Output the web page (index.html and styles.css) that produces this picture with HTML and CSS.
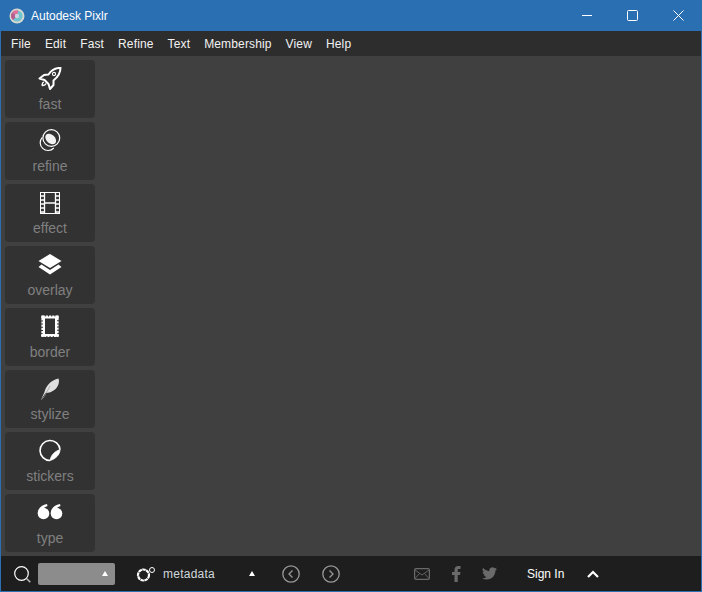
FILE: index.html
```html
<!DOCTYPE html>
<html lang="en">
<head>
<meta charset="utf-8">
<title>Autodesk Pixlr</title>
<link rel="stylesheet" href="styles.css">
</head>
<body>
<div class="window">
  <header class="titlebar">
    <svg class="app-icon" viewBox="0 0 16 16" width="16" height="16">
      <circle cx="8" cy="8" r="7.5" fill="#d8d8d0"/>
      <circle cx="8" cy="8" r="5.6" fill="#6fc4cf"/>
      <path d="M8 8 L3 4.5 A5.6 5.6 0 0 1 9.5 2.6 Z" fill="#e0709a"/>
      <path d="M8 8 L3 4.5 A5.6 5.6 0 0 0 4 12 Z" fill="#b85a8a"/>
      <circle cx="8" cy="8" r="2.2" fill="#c9d6e0"/>
    </svg>
    <span class="app-title">Autodesk Pixlr</span>
    <div class="win-controls">
      <svg width="10" height="11" viewBox="0 0 10 11"><path d="M0 5.500H10" stroke="#fff" fill="none"/></svg>
      <svg width="11" height="11" viewBox="0 0 11 11"><rect x=".5" y=".5" width="10" height="10" rx="1" stroke="#fff" fill="none"/></svg>
      <svg width="11" height="11" viewBox="0 0 11 11"><path d="M.5 .5L10.500 10.500M10.500 .5L.5 10.500" stroke="#fff" fill="none"/></svg>
    </div>
  </header>
  <nav class="menubar">
    <span>File</span><span>Edit</span><span>Fast</span><span>Refine</span><span>Text</span><span>Membership</span><span>View</span><span>Help</span>
  </nav>
  <main class="workspace">
    <aside class="tools">
      <div class="tool">
        <svg viewBox="0 0 24 24" width="24" height="24" fill="none" stroke="#fff" stroke-width="2" stroke-linejoin="round"><path d="M22.500 .8C17 1 13 3.500 10.500 7.500L6 8L1.500 11.500L6.500 13L10.500 17L12 22L15.500 18L15.500 13.500C20 10 22.500 6 22.500 .8Z"/><circle cx="16" cy="7" r="1.600" stroke-width="1.100"/><path d="M6 15C4.500 15.500 4 17 4.200 18.500C6 18.500 7.500 18 8 16.500" stroke-width="1.300"/></svg>
        <span>fast</span>
      </div>
      <div class="tool">
        <svg viewBox="0 0 24 24" width="24" height="24" fill="none" stroke="#fff" stroke-width="1.200"><circle cx="13.300" cy="9" r="8.400"/><path d="M4.300 8.300A7.500 7.500 0 0 0 15.800 19"/><ellipse cx="12.700" cy="10" rx="6.200" ry="4.300" transform="rotate(42 12.700 10)" fill="#f2f2f2" stroke="none"/></svg>
        <span>refine</span>
      </div>
      <div class="tool">
        <svg viewBox="0 0 22 24" width="22" height="24" fill="none" stroke="#fff"><path d="M1 1.500H21M1 22.500H21" stroke-width="1"/><path d="M5.500 1V23M16.500 1V23M5.500 12H16.500" stroke-width="1.300"/><path d="M1.500 1V23M20.500 1V23" stroke-width="1" /><path d="M1 5H5M1 9H5M1 13H5M1 17H5M1 21H5M17 5H21M17 9H21M17 13H21M17 17H21M17 21H21" stroke-width="1.300"/></svg>
        <span>effect</span>
      </div>
      <div class="tool">
        <svg viewBox="0 0 24 24" width="24" height="24" fill="#fff"><path d="M12 1L23.500 8L12 15L.5 8Z"/><path d="M3.500 11.500L12 17L20.500 11.500L23.500 14L12 21.500L.5 14Z"/></svg>
        <span>overlay</span>
      </div>
      <div class="tool">
        <svg viewBox="0 0 20 24" width="20" height="24" fill="none" stroke="#fff"><rect x="4" y="2.500" width="12" height="17.500" stroke-width="2"/><rect x="2.600" y="1.800" width="14.800" height="19" stroke-width="2.400" stroke-dasharray="2.200 1"/><g fill="#fff" stroke="none"><circle cx="3" cy="2.300" r="1.800"/><circle cx="17" cy="2.300" r="1.800"/><circle cx="3" cy="20.200" r="1.800"/><circle cx="17" cy="20.200" r="1.800"/></g></svg>
        <span>border</span>
      </div>
      <div class="tool">
        <svg viewBox="0 0 20 24" width="20" height="24"><path d="M1 22.700L4.500 15C6 9 11 3 18.500 1.500C20 5 18 10 15 12.500C12 15 9 16 5.500 16Z" fill="#e0e0e0"/><path d="M1 22.700L4 20L10 9" stroke="#999" fill="none" stroke-width=".7"/></svg>
        <span>stylize</span>
      </div>
      <div class="tool">
        <svg viewBox="0 0 24 24" width="24" height="24" fill="none" stroke="#fff" stroke-width="1.600"><path d="M22 10.700A10 10 0 1 0 12 21.500"/><path d="M12 21.500C13 16 17 12 22 10.700C22 15 18 20 12 21.500Z" fill="#fff" stroke-width=".8"/></svg>
        <span>stickers</span>
      </div>
      <div class="tool">
        <svg viewBox="0 0 26 24" width="26" height="24" fill="#fff"><circle cx="6.500" cy="12.500" r="5.800"/><circle cx="19.500" cy="12.500" r="5.800"/><path d="M.8 12C1 7 5 3.500 10 3L10.500 5C7 6 5 9 5 12Z"/><path d="M13.800 12C14 7 18 3.500 23 3L23.500 5C20 6 18 9 18 12Z"/></svg>
        <span>type</span>
      </div>
    </aside>
  </main>
  <footer class="statusbar">
    <svg class="search" viewBox="0 0 18 18" width="18" height="18" fill="none" stroke="#fff"><circle cx="8.500" cy="8.500" r="6.800" stroke-width="1.200"/><path d="M13.500 13.500L17.300 17.300" stroke="#bbb" stroke-width="1.500"/></svg>
    <div class="zoom-select"><i class="tri"></i></div>
    <svg class="meta-icon" viewBox="0 0 20 16" width="20" height="16" fill="none" stroke="#fff"><circle cx="7.500" cy="9" r="5.500" stroke-width="2.200" stroke-dasharray="3.500 .5"/><circle cx="16" cy="4" r="2.500" stroke-width="1"/></svg>
    <span class="meta-label">metadata</span>
    <i class="tri meta-tri"></i>
    <svg class="prev" viewBox="0 0 18 18" width="18" height="18" fill="none" stroke="#999" stroke-width="1.300"><circle cx="9" cy="9" r="8.200"/><path d="M10.500 5.500L7 9L10.500 12.500"/></svg>
    <svg class="next" viewBox="0 0 18 18" width="18" height="18" fill="none" stroke="#999" stroke-width="1.300"><circle cx="9" cy="9" r="8.200"/><path d="M7.500 5.500L11 9L7.500 12.500"/></svg>
    <svg class="mail" viewBox="0 0 16 12" width="16" height="12" fill="none" stroke="#6a6a6a" stroke-width="1.200"><rect x=".6" y=".6" width="14.800" height="10.800" rx="1.500"/><path d="M1 2L8 7L15 2M1 10.500L5.500 5.500M15 10.500L10.500 5.500" stroke-width=".9"/></svg>
    <svg class="fb" viewBox="0 0 9 16" width="9" height="16"><path d="M2.500 16V9H0V6H2.500V4C2.500 1.500 4 0 6.300 0H8.500V3H7C6 3 5.700 3.400 5.700 4.300V6H8.500L8 9H5.700V16Z" fill="#6a6a6a"/></svg>
    <svg class="tw" viewBox="0 0 24 20" width="15" height="13"><path d="M24 2.400a9.800 9.800 0 0 1-2.800.8A4.900 4.900 0 0 0 23.300.5a9.800 9.800 0 0 1-3.100 1.200 4.900 4.900 0 0 0-8.400 4.500A14 14 0 0 1 1.700 1a4.900 4.900 0 0 0 1.500 6.600 4.900 4.900 0 0 1-2.200-.6c0 2.400 1.700 4.400 3.900 4.900a4.900 4.900 0 0 1-2.200.1 4.900 4.900 0 0 0 4.600 3.400A9.900 9.900 0 0 1 0 17.400 14 14 0 0 0 7.500 19.600c9.100 0 14-7.500 14-14v-.6A10 10 0 0 0 24 2.400z" fill="#6a6a6a"/></svg>
    <span class="signin">Sign In</span>
    <svg class="chev" viewBox="0 0 12 8" width="12" height="8" fill="none" stroke="#fff" stroke-width="2.200"><path d="M1 7L6 2L11 7"/></svg>
  </footer>
</div>
</body>
</html>
```
FILE: styles.css
```css
* { box-sizing: border-box; }
html, body { margin: 0; padding: 0; height: 100%; }
body { font-family: "Liberation Sans", Arial, sans-serif; overflow: hidden; background: #2a6fb1; }
.window {
  width: 702px; height: 592px;
  display: flex; flex-direction: column;
  background: #2a6fb1;
  padding: 0 1px 1px;
}
.titlebar {
  height: 31px; flex: none;
  display: flex; align-items: center;
  padding-left: 8px;
  color: #fff;
  font-size: 12px;
}
.app-icon { flex: none; }
.app-title { margin-left: 6px; }
.win-controls {
  margin-left: auto;
  display: flex; gap: 35px; align-items: center;
  padding-right: 17px;
}
.win-controls svg { display: block; }
.menubar {
  height: 25px; flex: none;
  background: #2d2d2d;
  display: flex; align-items: center;
  padding-left: 10px; gap: 14px;
  color: #f2f2f2;
  font-size: 12px;
  letter-spacing: .14px;
}
.workspace { flex: 1; background: #404040; padding: 4px 0 0 4px; min-height: 0; }
.tools { display: flex; flex-direction: column; gap: 4px; width: 90px; }
.tool {
  height: 58px;
  background: #323232;
  border-radius: 4px;
  display: flex; flex-direction: column; align-items: center;
  color: #808080;
  font-size: 14px;
  padding-top: 7px;
}
.tool svg { display: block; height: 24px; flex: none; }
.tool span { margin-top: 5px; line-height: 16px; }
.statusbar {
  height: 35px; flex: none;
  background: #1e1e1e;
  display: flex; align-items: center;
  color: #e8e8e8;
  font-size: 12px;
}
.statusbar svg { display: block; flex: none; }
.search { margin-left: 12px; }
.zoom-select {
  width: 77px; height: 22px;
  margin-left: 7px;
  background: #8c8c8c;
  border-radius: 2px;
  display: flex; align-items: center; justify-content: flex-end;
  padding-right: 7px;
}
.tri {
  display: block; width: 0; height: 0;
  border-left: 3.5px solid transparent;
  border-right: 3.5px solid transparent;
  border-bottom: 5px solid #fff;
}
.meta-icon { margin-left: 21px; }
.meta-label { margin-left: 7px; color: #cfd8dc; width: 86px; letter-spacing: .25px; }
.meta-tri { margin-left: 0; }
.prev { margin-left: 27px; }
.next { margin-left: 22px; }
.mail { margin-left: 74px; }
.fb { margin-left: 22px; }
.tw { margin-left: 21px; }
.signin { margin-left: 30px; color: #fff; }
.chev { margin-left: 23px; }
```
